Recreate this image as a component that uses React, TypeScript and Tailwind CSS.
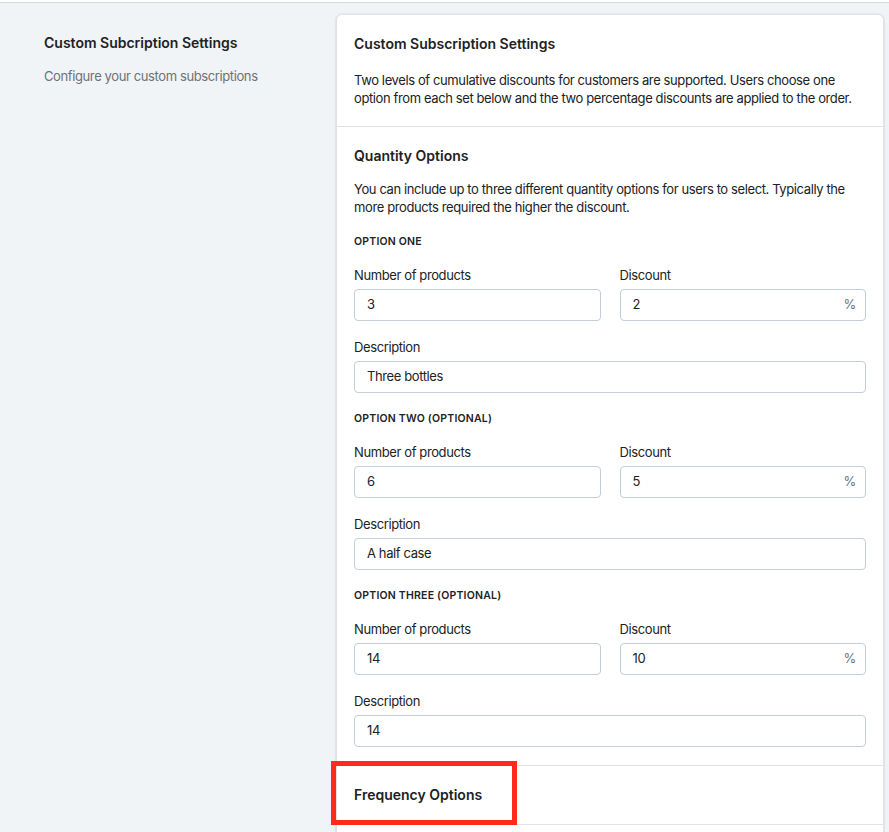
import React from "react";

const options = [
  { title: "Option one", qty: "3", discount: "2", description: "Three bottles" },
  { title: "Option two (optional)", qty: "6", discount: "5", description: "A half case" },
  { title: "Option three (optional)", qty: "14", discount: "10", description: "14" },
];

const TextInput = ({ value, suffix }: { value: string; suffix?: string }) => (
  <div className="flex items-center h-8 rounded-[4px] border border-[#c4cdd5] bg-white pl-3 pr-[9px] text-[13px] tracking-[-0.03em] text-[#202223]">
    <span className="flex-1">{value}</span>
    {suffix && <span className="text-[#6d7175]">{suffix}</span>}
  </div>
);

const Field = ({ label, value, suffix }: { label: string; value: string; suffix?: string }) => (
  <div className="flex-1">
    <div className="text-[13px] leading-5 tracking-[-0.03em] text-[#202223] mb-1">{label}</div>
    <TextInput value={value} suffix={suffix} />
  </div>
);

const App = () => {
  return (
    <div
      className="min-h-[832px] bg-[#f1f4f7] text-[#202223]"
      style={{ fontFamily: "Inter, 'Noto Sans', sans-serif" }}
    >
      <div className="h-[2px] bg-white" />
      <div className="border-t border-[#d4d7db] pt-[11px] flex pl-[44px] pr-[5px]">
        {/* Left description column */}
        <div className="w-[292px] shrink-0 pt-[19px]">
          <h2 className="text-[14px] leading-5 font-semibold">Custom Subcription Settings</h2>
          <p className="mt-[13px] text-[13px] leading-5 tracking-[-0.03em] text-[#6d7175]">Configure your custom subscriptions</p>
        </div>

        {/* Card */}
        <div className="flex-1 bg-white rounded-t-[6px] border border-[#dfe3e8] shadow-[0_0_0_1px_rgba(63,63,68,0.03),0_1px_3px_0_rgba(63,63,68,0.12)]">
          <div className="px-[17px] pt-[19px] pb-[19px] border-b border-[#dfe3e8]">
            <h2 className="text-[14px] leading-5 font-semibold">Custom Subscription Settings</h2>
            <p className="mt-[17px] text-[13px] leading-[18px] tracking-[-0.03em]">
              Two levels of cumulative discounts for customers are supported. Users choose one option from each set below
              and the two percentage discounts are applied to the order.
            </p>
          </div>

          <div className="px-[17px] pt-[19px] pb-[18px] border-b border-[#dfe3e8]">
            <h2 className="text-[14px] leading-5 font-semibold">Quantity Options</h2>
            <p className="mt-[14px] text-[13px] leading-[18px] tracking-[-0.03em]">
              You can include up to three different quantity options for users to select. Typically the more products
              required the higher the discount.
            </p>

            {options.map((opt) => (
              <div key={opt.title} className="mt-[18px]">
                <div className="text-[10.5px] leading-4 font-semibold uppercase tracking-[0.02em]">{opt.title}</div>
                <div className="mt-[15px] flex gap-[19px]">
                  <Field label="Number of products" value={opt.qty} />
                  <Field label="Discount" value={opt.discount} suffix="%" />
                </div>
                <div className="mt-[16px]">
                  <Field label="Description" value={opt.description} />
                </div>
              </div>
            ))}
          </div>

          <div className="relative px-[17px] pt-[19px] pb-[19px] border-b border-[#dfe3e8]">
            <h2 className="text-[14px] leading-5 font-semibold">Frequency Options</h2>
            <div className="absolute top-[-5px] left-[-6px] w-[186px] h-[64px] border-[5px] border-[#ff2a1c]" />
          </div>
          <div className="h-[40px]" />
        </div>
      </div>
    </div>
  );
};

export default App;
